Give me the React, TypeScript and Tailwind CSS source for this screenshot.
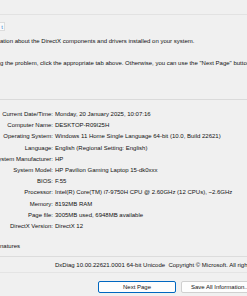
import React from 'react';

type InfoRow = {
    label: string;
    value: string;
};

const rows: InfoRow[] = [
    { label: 'Current Date/Time:', value: 'Monday, 20 January 2025, 10:07:16' },
    { label: 'Computer Name:', value: 'DESKTOP-R09I25H' },
    { label: 'Operating System:', value: 'Windows 11 Home Single Language 64-bit (10.0, Build 22621)' },
    { label: 'Language:', value: 'English (Regional Setting: English)' },
    { label: 'System Manufacturer:', value: 'HP' },
    { label: 'System Model:', value: 'HP Pavilion Gaming Laptop 15-dk0xxx' },
    { label: 'BIOS:', value: 'F.55' },
    { label: 'Processor:', value: 'Intel(R) Core(TM) i7-9750H CPU @ 2.60GHz (12 CPUs), ~2.6GHz' },
    { label: 'Memory:', value: '8192MB RAM' },
    { label: 'Page file:', value: '3005MB used, 6948MB available' },
    { label: 'DirectX Version:', value: 'DirectX 12' },
];

const App: React.FC = () => {
    return (
        <div
            className="w-[247px] h-[296px] overflow-hidden bg-[#f0f0f0] text-[#111111] text-[6px] leading-[11px] whitespace-nowrap"
            style={{ fontFamily: '"Liberation Sans", Arial, sans-serif' }}
        >
            {/* tab strip */}
            <div className="h-[15px] border-b border-[#e2e2e2]"></div>
            <div className="mt-[7px] h-[9px] w-[5px] bg-[#fafafa] border border-l-0 border-[#dcdcdc] flex items-center justify-end pr-[1px]">
                <span className="text-[#3b7fd0] leading-none text-[6px]">t</span>
            </div>

            {/* intro text */}
            <div className="mt-[5px]">
                <p className="h-[11px]">ation about the DirectX components and drivers installed on your system.</p>
                <p className="mt-[11px] h-[11px]">g the problem, click the appropriate tab above. Otherwise, you can use the "Next Page" button below to visit each page in sequence.</p>
            </div>

            {/* system information group */}
            <div className="mt-[30px] border-t border-[#dadada] pt-[9px]">
                {rows.map(row => (
                    <div key={row.label} className="flex h-[11.2px] leading-[11.2px]">
                        <div className="w-[53px] flex justify-end overflow-hidden shrink-0">
                            <span className="shrink-0">{row.label}</span>
                        </div>
                        <span className="ml-[2px]">{row.value}</span>
                    </div>
                ))}
            </div>

            <p className="mt-[8.5px] h-[11px]">natures</p>

            <div className="mt-[4.5px] border-t border-[#dcdcdc]"></div>
            <p className="mt-[2.5px] pl-[55px] h-[11px]">DxDiag 10.00.22621.0001 64-bit Unicode&nbsp; Copyright © Microsoft. All rights reserved.</p>
            <div className="mt-[1.5px] border-t border-[#e4e4e4]"></div>

            {/* buttons */}
            <div className="mt-[8px] flex gap-[5px] pl-[98px]">
                <button className="w-[78px] h-[12px] shrink-0 rounded-[2px] border border-[#0067c0] bg-[#fdfdfd] text-[6px] leading-[10px]">
                    Next Page
                </button>
                <button className="w-[90px] h-[12px] shrink-0 rounded-[2px] border border-[#d0d0d0] bg-[#fdfdfd] text-[6px] leading-[10px] text-left pl-[9px]">
                    Save All Information...
                </button>
            </div>
        </div>
    );
};

export default App;
